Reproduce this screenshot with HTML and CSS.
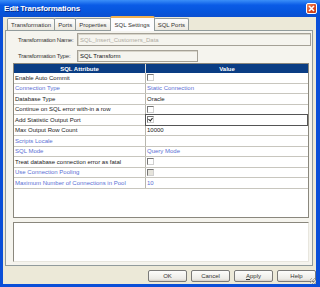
FILE: index.html
```html
<!DOCTYPE html>
<html lang="en">
<head>
  <meta charset="UTF-8" />
  <title>Edit Transformations</title>
  <link rel="stylesheet" href="styles.css">
</head>
<body>
  <div class="window">
    <div class="titlebar">
      <span class="title">Edit Transformations</span>
      <span class="close">
        <svg width="7" height="7" viewBox="0 0 7 7"><path d="M1 1 L6 6 M6 1 L1 6" stroke="#fff" stroke-width="1.6"/></svg>
      </span>
    </div>

    <div class="frame">
      <div class="tabs">
        <div class="tab">Transformation</div>
        <div class="tab">Ports</div>
        <div class="tab">Properties</div>
        <div class="tab active">SQL Settings</div>
        <div class="tab">SQL Ports</div>
      </div>

      <div class="panel">
        <div class="field-row">
          <label>Transformation Name:</label>
          <div class="field disabled wide">SQL_Insert_Customers_Data</div>
        </div>
        <div class="field-row short">
          <label>Transformation Type:</label>
          <div class="field narrow">SQL Transform</div>
        </div>

        <div class="grid">
          <div class="grid-head">
            <div>SQL Attribute</div>
            <div>Value</div>
          </div>
          <div class="grid-row"><div>Enable Auto Commit</div><div><span class="check"></span></div></div>
          <div class="grid-row off"><div>Connection Type</div><div>Static Connection</div></div>
          <div class="grid-row"><div>Database Type</div><div>Oracle</div></div>
          <div class="grid-row"><div>Continue on SQL error with-in a row</div><div><span class="check"></span></div></div>
          <div class="grid-row"><div>Add Statistic Output Port</div><div class="focus"><span class="check on"></span></div></div>
          <div class="grid-row"><div>Max Output Row Count</div><div>10000</div></div>
          <div class="grid-row off"><div>Scripts Locale</div><div></div></div>
          <div class="grid-row off"><div>SQL Mode</div><div>Query Mode</div></div>
          <div class="grid-row"><div>Treat database connection error as fatal</div><div><span class="check"></span></div></div>
          <div class="grid-row off"><div>Use Connection Pooling</div><div><span class="check grey"></span></div></div>
          <div class="grid-row off"><div>Maximum Number of Connections in Pool</div><div>10</div></div>
        </div>

        <div class="description"></div>
      </div>

      <div class="buttons">
        <button>OK</button>
        <button>Cancel</button>
        <button><u>A</u>pply</button>
        <button>Help</button>
      </div>
      <span class="grip"></span>
    </div>
  </div>
</body>
</html>
```

FILE: styles.css
```css
body {
  margin: 0;
  font-family: 'Liberation Sans', Arial, sans-serif;
  font-size: 6px;
  color: #222;
}

.window {
  width: 320px;
  height: 287px;
  background: #0a4fd8;
  display: flex;
  flex-direction: column;
  box-sizing: border-box;
}

.titlebar {
  height: 17px;
  display: flex;
  align-items: center;
  justify-content: space-between;
  padding: 0 3px 0 4px;
  background: linear-gradient(#3b8ff8, #0a5be6 30%, #0655dc 70%, #0b4fd0);
}

.titlebar .title {
  color: white;
  font-weight: bold;
  font-size: 8px;
  letter-spacing: -0.2px;
  text-shadow: 1px 1px 0 #0a2c8a;
}

.close {
  width: 11px;
  height: 11px;
  border: 1px solid #fff;
  border-radius: 2px;
  box-sizing: border-box;
  background: linear-gradient(135deg, #f08a5c, #d8461e 60%, #c13a14);
  display: flex;
  align-items: center;
  justify-content: center;
}

.frame {
  flex: 1;
  margin: 0 4px 3px 3px;
  background: #ece9d8;
  display: flex;
  flex-direction: column;
  position: relative;
}

.tabs {
  display: flex;
  align-items: flex-end;
  padding: 1px 0 0 4px;
  height: 13px;
  box-sizing: border-box;
}

.tab {
  height: 11px;
  padding: 0 3px;
  border: 1px solid #919b9c;
  border-bottom: none;
  border-radius: 2px 2px 0 0;
  background: linear-gradient(#fefefe, #ece9e0);
  display: flex;
  align-items: center;
  margin-right: -1px;
  color: #333;
}

.tab.active {
  height: 13px;
  background: #fcfcfe;
  border-top: 2px solid #f0b050;
  position: relative;
  z-index: 1;
  margin-bottom: -1px;
  padding: 0 4px;
}

.panel {
  flex: none;
  height: 236px;
  margin: 0 3px 0 2px;
  border: 1px solid #919b9c;
  background: #f5f4ee;
  box-sizing: border-box;
  padding: 2px 3px 3px 7px;
  display: flex;
  flex-direction: column;
}

.field-row {
  display: flex;
  align-items: center;
  height: 13px;
}

.field-row.short {
  height: 12px;
  margin: 4px 0 1px;
}

.field-row label {
  flex: none;
  width: 64px;
  padding-left: 5px;
  box-sizing: border-box;
  color: #333;
  white-space: nowrap;
  letter-spacing: -0.2px;
}

.field {
  height: 100%;
  border: 1px solid #a5a196;
  box-shadow: inset 1px 1px 0 #d8d5ca;
  box-sizing: border-box;
  display: flex;
  align-items: center;
  padding-left: 2px;
  background: #f5f4ee;
}

.field.wide { flex: 1; margin-right: -2px; }
.field.narrow { width: 121px; color: #111; }
.field.disabled { color: #b0ada4; }

.grid {
  height: 155px;
  background: white;
  border: 1px solid #8a877d;
  box-sizing: border-box;
}

.grid-head,
.grid-row {
  display: grid;
  grid-template-columns: 132px 1fr;
}

.grid-head {
  height: 9px;
  background: #0a3d84;
  color: white;
  font-weight: bold;
}

.grid-head div {
  display: flex;
  align-items: center;
  justify-content: center;
}

.grid-head div:first-child {
  border-right: 1px solid #d8d8d8;
}

.grid-row {
  height: 10.5px;
  border-bottom: 1px solid #c8c6be;
  box-sizing: border-box;
}

.grid-row div {
  display: flex;
  align-items: center;
  padding-left: 1px;
  overflow: hidden;
  white-space: nowrap;
}

.grid-row div:first-child {
  border-right: 1px solid #b8b6ae;
}

.grid-row.off div {
  color: #5b70d4;
}

.grid-row .focus {
  border: 1px solid #555;
  margin: -1px 0 -1px -1px;
}

.check {
  width: 7px;
  height: 7px;
  border: 1px solid #777;
  border-right-color: #d0d0d0;
  border-bottom-color: #d0d0d0;
  box-sizing: border-box;
  background: white;
  position: relative;
}

.check.grey { background: #e6e4dc; }

.check.on::after {
  content: "";
  position: absolute;
  left: 1px;
  top: 0;
  width: 2px;
  height: 3px;
  border: solid #222;
  border-width: 0 1px 1px 0;
  transform: rotate(40deg);
}

.description {
  height: 40px;
  margin-top: 4px;
  background: white;
  border: 1px solid #8a877d;
  border-right-color: #e8e6de;
  border-bottom-color: #e8e6de;
  box-sizing: border-box;
}

.buttons {
  display: flex;
  justify-content: flex-end;
  gap: 4px;
  margin-top: 4px;
}

.buttons button {
  width: 39px;
  height: 12px;
  padding: 0;
  font-family: inherit;
  font-size: 6px;
  color: #333;
  background: linear-gradient(#fdfdfb, #ecebe6 80%, #d6d0c5);
  border: 1px solid #7a7a78;
  border-radius: 2px;
}

.grip {
  position: absolute;
  right: 0;
  bottom: 0;
  width: 6px;
  height: 6px;
  background: repeating-linear-gradient(135deg, transparent 0 1px, #b0ac9e 1px 2px);
}
```
